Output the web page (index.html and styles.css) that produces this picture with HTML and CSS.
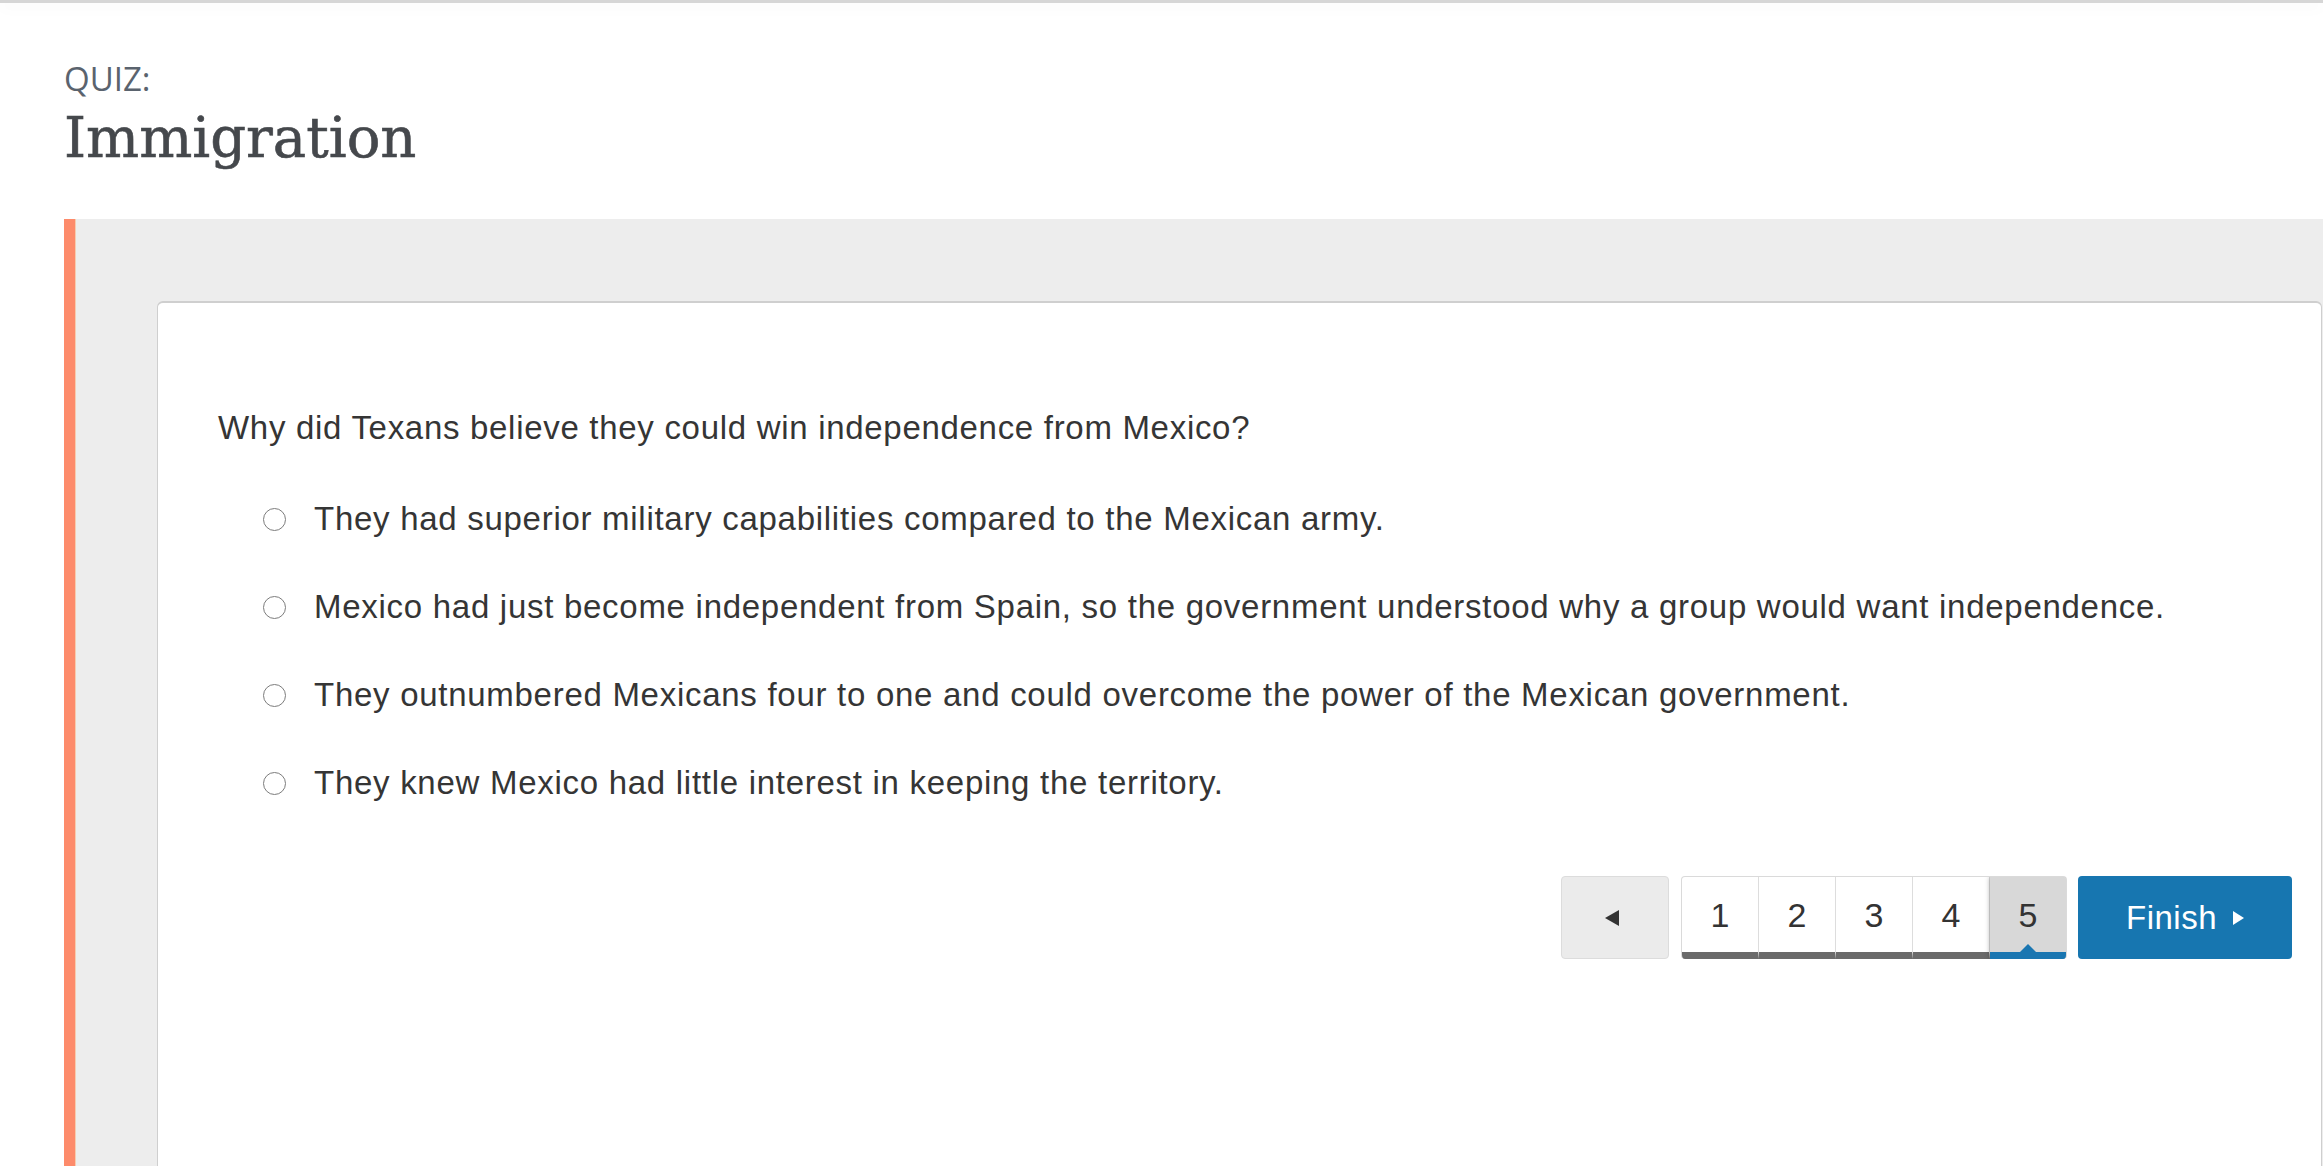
FILE: index.html
```html
<!DOCTYPE html>
<html lang="en">
<head>
<meta charset="utf-8">
<title>Quiz: Immigration</title>
<link rel="stylesheet" href="styles.css">
</head>
<body>
<div class="topbar"></div>
<header class="quiz-header">
  <div class="quiz-label">QUIZ:</div>
  <h1 class="quiz-title">Immigration</h1>
</header>
<section class="panel">
  <div class="accent"></div>
  <div class="panel-inner">
    <div class="card">
      <p class="question">Why did Texans believe they could win independence from Mexico?</p>
      <ul class="options">
        <li class="option"><span class="radio"></span><span class="option-text">They had superior military capabilities compared to the Mexican army.</span></li>
        <li class="option"><span class="radio"></span><span class="option-text">Mexico had just become independent from Spain, so the government understood why a group would want independence.</span></li>
        <li class="option"><span class="radio"></span><span class="option-text">They outnumbered Mexicans four to one and could overcome the power of the Mexican government.</span></li>
        <li class="option"><span class="radio"></span><span class="option-text">They knew Mexico had little interest in keeping the territory.</span></li>
      </ul>
      <nav class="pager">
        <button class="btn-prev" aria-label="Previous"><span class="tri-left"></span></button>
        <div class="pages">
          <span class="page">1</span>
          <span class="page">2</span>
          <span class="page">3</span>
          <span class="page">4</span>
          <span class="page current">5</span>
        </div>
        <button class="btn-finish">Finish <span class="tri-right"></span></button>
      </nav>
    </div>
  </div>
</section>
</body>
</html>
```

FILE: styles.css
```css
html, body {
  margin: 0;
  padding: 0;
  background: #ffffff;
  overflow: hidden;
}
body {
  font-family: "Liberation Sans", Arial, sans-serif;
  color: #333333;
}
.topbar {
  height: 3px;
  background: #d6d6d6;
  box-shadow: 0 3px 16px rgba(0, 0, 0, 0.07);
}
.quiz-header {
  padding: 59px 0 0 64px;
}
.quiz-label {
  font-family: "Open Sans", sans-serif;
  font-weight: 400;
  font-size: 33px;
  line-height: 33px;
  color: #5a636e;
}
.quiz-title {
  margin: 15px 0 0 0;
  font-family: "DejaVu Serif", serif;
  font-weight: normal;
  font-size: 56px;
  line-height: 55px;
  color: #45484c;
  -webkit-text-stroke: 0.6px #45484c;
}
.panel {
  margin: 54px 0 0 64px;
  display: flex;
  height: 1000px;
}
.accent {
  width: 11px;
  background: #fd8b6b;
  border-right: 1px solid #f6cdb0;
  flex: none;
}
.panel-inner {
  flex: 1;
  background: #ededed;
  padding: 82px 1px 0 81px;
}
.card {
  background: #ffffff;
  border: 1px solid #cfcfcf;
  border-top-width: 2px;
  border-radius: 6px 6px 0 0;
  height: 100%;
  box-sizing: border-box;
  padding: 105px 29px 0 60px;
}
.question {
  margin: 0;
  font-size: 33px;
  line-height: 40px;
  letter-spacing: 0.7px;
  color: #353535;
}
.options {
  list-style: none;
  margin: 51px 0 0 0;
  padding: 0 0 0 45px;
}
.option {
  display: flex;
  align-items: center;
  height: 40px;
  margin-bottom: 48px;
  font-size: 33px;
  line-height: 40px;
  letter-spacing: 0.72px;
  color: #353535;
}
.option:last-child {
  margin-bottom: 0;
}
.radio {
  width: 21px;
  height: 21px;
  border: 1.5px solid #7c7c7c;
  border-radius: 50%;
  background: #fff;
  flex: none;
  margin-right: 28px;
}
.pager {
  margin-top: 73px;
  display: flex;
  justify-content: flex-end;
  align-items: stretch;
  height: 83px;
}
.btn-prev {
  width: 108px;
  box-sizing: border-box;
  background: #ebebeb;
  border: 1px solid #dcdcdc;
  border-radius: 4px;
  display: flex;
  align-items: center;
  justify-content: center;
  padding: 0;
  margin-right: 12px;
}
.tri-left {
  width: 0;
  height: 0;
  border-top: 8px solid transparent;
  border-bottom: 8px solid transparent;
  border-right: 14px solid #333;
  margin-left: -6px;
}
.pages {
  display: flex;
  width: 386px;
  box-sizing: border-box;
  border: 1px solid #dadada;
  border-bottom: none;
  border-radius: 4px;
  overflow: hidden;
  margin-right: 11px;
  position: relative;
}
.page {
  flex: 1;
  display: flex;
  align-items: center;
  justify-content: center;
  font-size: 34px;
  color: #333;
  border-right: 1px solid #dddddd;
  border-bottom: 7px solid #6a6a6a;
  padding-top: 1px;
  position: relative;
}
.page:last-child {
  border-right: none;
}
.page.current {
  background: #d8d8d8;
  border-bottom-color: #1a76b1;
  box-shadow: 0 0 5px rgba(0, 0, 0, 0.35);
}
.page.current::after {
  content: "";
  position: absolute;
  left: 50%;
  bottom: 0;
  margin-left: -8px;
  width: 0;
  height: 0;
  border-left: 8px solid transparent;
  border-right: 8px solid transparent;
  border-bottom: 8px solid #1a76b1;
}
.btn-finish {
  width: 214px;
  background: #1776b0;
  border: none;
  border-radius: 4px;
  color: #ffffff;
  font-family: "Liberation Sans", Arial, sans-serif;
  font-size: 33px;
  letter-spacing: 0.5px;
  display: flex;
  align-items: center;
  justify-content: center;
  padding: 0;
  gap: 16px;
}
.tri-right {
  width: 0;
  height: 0;
  border-top: 7px solid transparent;
  border-bottom: 7px solid transparent;
  border-left: 11px solid #ffffff;
}
```
